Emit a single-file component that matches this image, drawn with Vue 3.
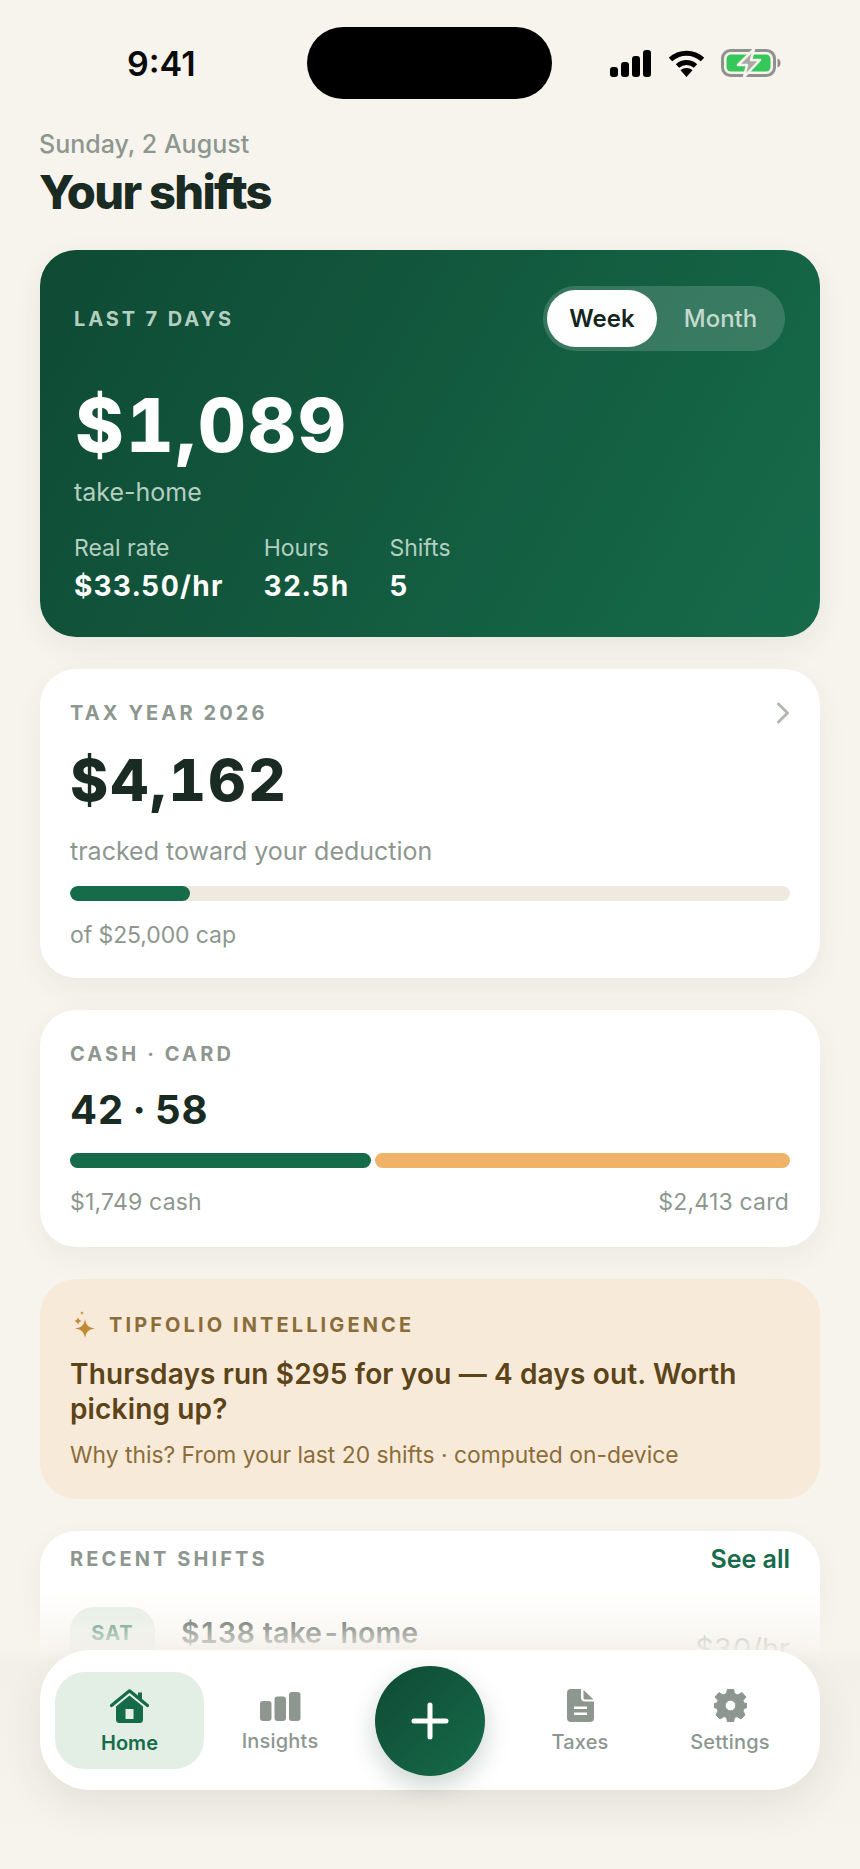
<template>
  <div class="screen">
    <div class="status">
      <span class="time">9:41</span>
      <div class="island"></div>
      <div class="status-icons">
        <svg width="42" height="27" viewBox="0 0 42 27">
          <rect x="0" y="17" width="8" height="10" rx="3" />
          <rect x="11" y="12" width="8" height="15" rx="3" />
          <rect x="22" y="6" width="8" height="21" rx="3" />
          <rect x="33" y="0" width="8" height="27" rx="3" />
        </svg>
        <svg width="37" height="27" viewBox="0 0 37 27">
          <path d="M2.5 9.5C11.5 1 25.5 1 34.5 9.5" fill="none" stroke="#000" stroke-width="5" />
          <path d="M9.5 16C14.8 11.3 22.2 11.3 27.5 16" fill="none" stroke="#000" stroke-width="5" />
          <path d="M12.5 20.2C16 17.2 21 17.2 24.5 20.2L18.5 27Z" />
        </svg>
        <svg width="60" height="28" viewBox="0 0 60 28">
          <rect x="1.5" y="1.5" width="52" height="25" rx="8" fill="none" stroke="#8f918d" stroke-width="3" />
          <rect x="5.5" y="5.5" width="44" height="17" rx="4.5" fill="#35c759" />
          <path d="M56.5 9.5C59 10.5 59.5 12 59.5 14C59.5 16 59 17.5 56.5 18.500Z" fill="#8f918d" />
          <path d="M33 0L17 16H26L23 28L39 11H30Z" fill="#a9aaa6" stroke="#f7f4ee" stroke-width="2.500" stroke-linejoin="round" />
        </svg>
      </div>
    </div>

    <header class="head">
      <div class="date">Sunday, 2 August</div>
      <h1>Your shifts</h1>
    </header>

    <main class="cards">
      <section class="hero">
        <div class="hero-top">
          <span class="eyebrow hero-eyebrow">LAST 7 DAYS</span>
          <div class="toggle">
            <span class="toggle-on">Week</span>
            <span class="toggle-off">Month</span>
          </div>
        </div>
        <div class="hero-amount">$1,089</div>
        <div class="hero-sub">take-home</div>
        <div class="stats">
          <div v-for="s in stats" :key="s.label" class="stat">
            <span class="stat-label">{{ s.label }}</span>
            <span class="stat-value">{{ s.value }}</span>
          </div>
        </div>
      </section>

      <section class="card tax">
        <div class="row">
          <span class="eyebrow">TAX YEAR 2026</span>
          <svg class="chev" width="14" height="22" viewBox="0 0 14 22">
            <path d="M2.500 2L11.500 11L2.500 20" fill="none" stroke="#b3b8b0" stroke-width="3" stroke-linecap="round" stroke-linejoin="round" />
          </svg>
        </div>
        <div class="tax-amount">$4,162</div>
        <div class="tax-sub">tracked toward your deduction</div>
        <div class="track"><div class="track-fill"></div></div>
        <div class="small">of $25,000 cap</div>
      </section>

      <section class="card cash">
        <span class="eyebrow">CASH · CARD</span>
        <div class="cash-split">42 · 58</div>
        <div class="split-bar">
          <div class="split-cash"></div>
          <div class="split-card"></div>
        </div>
        <div class="row small cash-labels">
          <span>$1,749 cash</span>
          <span>$2,413 card</span>
        </div>
      </section>

      <section class="tip">
        <div class="tip-top">
          <svg width="24" height="27" viewBox="0 0 24 27">
            <path d="M13 8C14 14 16.500 16.500 23 17.500C16.500 18.500 14 21 13 27C12 21 9.500 18.500 3 17.500C9.500 16.500 12 14 13 8Z" fill="#c18a35" />
            <path d="M6 6C6.400 8.500 7.500 9.600 10 10C7.500 10.400 6.400 11.500 6 14C5.600 11.500 4.500 10.400 2 10C4.500 9.600 5.600 8.500 6 6Z" fill="#c18a35" />
            <path d="M10 0C10.200 1.200 10.800 1.800 12 2C10.800 2.200 10.200 2.800 10 4C9.800 2.800 9.200 2.200 8 2C9.200 1.800 9.800 1.200 10 0Z" fill="#c18a35" />
          </svg>
          <span class="tip-label">TIPFOLIO INTELLIGENCE</span>
        </div>
        <p class="tip-head">Thursdays run $295 for you — 4 days out. Worth picking up?</p>
        <p class="tip-sub">Why this? From your last 20 shifts · computed on-device</p>
      </section>

      <section class="card recent">
        <div class="row recent-top">
          <span class="eyebrow">RECENT SHIFTS</span>
          <span class="see-all">See all</span>
        </div>
        <div class="shift">
          <div class="day">SAT</div>
          <div class="shift-title">$138 take-home</div>
          <div class="shift-rate">$30/hr</div>
        </div>
      </section>
    </main>

    <div class="fade"></div>

    <nav class="nav">
      <div class="nav-item active">
        <svg width="39" height="34" viewBox="0 0 39 34">
          <path d="M1.500 16.500L19.500 1.800L37.500 16.500" fill="none" stroke="#156a4a" stroke-width="3.200" stroke-linecap="round" stroke-linejoin="round" />
          <path d="M28 3.500H32V11L28 8Z" fill="#156a4a" />
          <path fill-rule="evenodd" d="M19.500 6.500L33 17.500V30.500A3.500 3.500 0 0 1 29.500 34H9.500A3.500 3.500 0 0 1 6 30.500V17.500ZM15.500 20V30H23.500V20Z" fill="#156a4a" />
        </svg>
        <span>Home</span>
      </div>
      <div class="nav-item insights">
        <svg width="41" height="29" viewBox="0 0 41 29">
          <rect x="0" y="9" width="11.500" height="20" rx="3" />
          <rect x="14.500" y="4.500" width="11.500" height="24.500" rx="3" />
          <rect x="29" y="0" width="11.500" height="29" rx="3" />
        </svg>
        <span>Insights</span>
      </div>
      <div class="nav-fab-wrap">
        <button class="fab" aria-label="Add">
          <svg width="38" height="38" viewBox="0 0 38 38">
            <path d="M19 3V35M3 19H35" stroke="#fff" stroke-width="5" stroke-linecap="round" />
          </svg>
        </button>
      </div>
      <div class="nav-item">
        <svg width="27" height="33" viewBox="0 0 27 33">
          <path fill-rule="evenodd" d="M4 0H14V8.500A4 4 0 0 0 18 12.500H27V29A4 4 0 0 1 23 33H4A4 4 0 0 1 0 29V4A4 4 0 0 1 4 0ZM7 17.500V20H20V17.500ZM7 23.500V26H20V23.500Z" />
          <path d="M16.500 1L26.500 10.500H18A1.500 1.500 0 0 1 16.500 9Z" />
        </svg>
        <span>Taxes</span>
      </div>
      <div class="nav-item">
        <svg width="33" height="33" viewBox="0 0 33 33">
          <path fill-rule="evenodd" d="M13.500 0H19.500L20.500 4.500L24 6L28 3.500L32 8L29 11.500L30 14L33 14.500V18.500L30 19.500L29 22L31 26L27 30L23 27.500L20.500 28.500L19.500 33H13.500L12.500 28.500L10 27.500L6 30L2 26L4 22L3 19.500L0 18.500V14.500L3 14L4 11.500L1 8L5 3.500L9 6L12.500 4.500ZM16.500 11.200A5.300 5.300 0 1 0 16.500 21.800A5.300 5.300 0 1 0 16.500 11.200Z" stroke="#8d978f" stroke-width="1" stroke-linejoin="round" />
        </svg>
        <span>Settings</span>
      </div>
    </nav>
  </div>
</template>

<script setup>
const stats = [
  { label: 'Real rate', value: '$33.50/hr' },
  { label: 'Hours', value: '32.5h' },
  { label: 'Shifts', value: '5' },
]
</script>

<style>
body {
  background: #f7f4ee;
}
</style>

<style scoped>
.screen {
  position: relative;
  width: 860px;
  height: 1869px;
  overflow: hidden;
  background: #f7f4ee;
  font-family: Inter, "Liberation Sans", sans-serif;
  color: #1a2b23;
}

.status {
  display: flex;
  align-items: center;
  height: 72px;
  padding-top: 27px;
}

.time {
  width: 307px;
  padding-left: 127px;
  box-sizing: border-box;
  font-size: 34px;
  font-weight: 600;
  color: #0b0b0b;
}

.island {
  width: 245px;
  height: 72px;
  border-radius: 36px;
  background: #000;
}

.status-icons {
  display: flex;
  align-items: center;
  gap: 16px;
  margin-left: 58px;
}

.head {
  padding: 29px 39px 0;
}

.date {
  font-size: 25px;
  line-height: 32px;
  font-weight: 500;
  color: #8d978f;
}

h1 {
  margin: 5px 0 0;
  font-size: 47px;
  line-height: 54px;
  font-weight: 800;
  letter-spacing: -1.7px;
  color: #1a2b23;
}

.cards {
  display: flex;
  flex-direction: column;
  gap: 32px;
  margin-top: 31px;
  padding: 0 40px;
}

.hero {
  height: 387px;
  box-sizing: border-box;
  padding: 36px 35px 0 34px;
  border-radius: 36px;
  background: linear-gradient(120deg, #0f4a34 0%, #166b4b 100%);
  box-shadow: 0 10px 30px rgba(60, 50, 30, 0.07);
  color: #fff;
}

.hero-top {
  display: flex;
  justify-content: space-between;
  align-items: center;
}

.eyebrow {
  font-size: 20px;
  line-height: 26px;
  font-weight: 700;
  letter-spacing: 3.1px;
  color: #8d978f;
}

.hero-eyebrow {
  letter-spacing: 2.9px;
  color: #b4cfc1;
}

.toggle {
  display: flex;
  align-items: center;
  width: 242px;
  height: 65px;
  box-sizing: border-box;
  padding: 4px;
  border-radius: 33px;
  background: rgba(255, 255, 255, 0.16);
  font-size: 24px;
}

.toggle-on {
  width: 110px;
  height: 57px;
  border-radius: 29px;
  background: #fff;
  color: #14251d;
  font-weight: 600;
  text-align: center;
  line-height: 57px;
}

.toggle-off {
  flex: 1;
  padding-left: 3px;
  text-align: center;
  color: #c4dacd;
  font-weight: 500;
}

.hero-amount {
  margin-top: 30px;
  padding-left: 1px;
  font-size: 74px;
  line-height: 88px;
  font-weight: 800;
  font-variant-numeric: tabular-nums;
  letter-spacing: 2.2px;
}

.hero-sub {
  margin-top: 7px;
  font-size: 25px;
  line-height: 32px;
  color: #b4cfc1;
}

.stats {
  display: flex;
  gap: 40px;
  margin-top: 26px;
}

.stat {
  display: flex;
  flex-direction: column;
  gap: 7px;
}

.stat-label {
  font-size: 23px;
  line-height: 28px;
  color: #b4cfc1;
}

.stat-value {
  font-size: 28px;
  line-height: 34px;
  font-weight: 700;
  font-variant-numeric: tabular-nums;
  letter-spacing: 1.3px;
}

.card {
  box-sizing: border-box;
  padding: 31px 30px 0;
  border-radius: 36px;
  background: #fff;
  box-shadow: 0 10px 30px rgba(60, 50, 30, 0.06);
}

.row {
  display: flex;
  justify-content: space-between;
  align-items: center;
}

.tax {
  height: 309px;
}

.tax-amount {
  margin-top: 18px;
  font-size: 58px;
  line-height: 72px;
  font-weight: 800;
  font-variant-numeric: tabular-nums;
  letter-spacing: 2.4px;
}

.tax-sub {
  margin-top: 19px;
  font-size: 25px;
  line-height: 32px;
  color: #8d978f;
}

.track {
  margin-top: 19px;
  height: 15px;
  border-radius: 8px;
  background: #eeeadf;
  overflow: hidden;
}

.track-fill {
  width: 120px;
  height: 100%;
  border-radius: 8px;
  background: #166b4b;
}

.small {
  font-size: 23px;
  line-height: 28px;
  color: #8d978f;
}

.tax .small {
  margin-top: 20px;
  font-size: 23px;
  letter-spacing: -0.1px;
}

.cash {
  height: 237px;
}

.cash .eyebrow {
  display: block;
}

.cash-split {
  margin-top: 18px;
  font-size: 40px;
  line-height: 50px;
  font-weight: 700;
  letter-spacing: 0.9px;
  word-spacing: -2px;
}

.split-bar {
  display: flex;
  gap: 4px;
  margin-top: 18px;
  height: 15px;
}

.split-cash {
  width: 301px;
  border-radius: 8px;
  background: #166b4b;
}

.split-card {
  flex: 1;
  border-radius: 8px;
  background: #f0b266;
}

.cash-labels {
  margin-top: 20px;
  padding-right: 1px;
  letter-spacing: 0.2px;
}

.tip {
  height: 220px;
  box-sizing: border-box;
  padding: 32px 30px 0;
  border-radius: 36px;
  background: #f7ead8;
}

.tip-top {
  display: flex;
  align-items: center;
  gap: 13px;
  padding-left: 2px;
}

.tip-label {
  font-size: 20px;
  line-height: 26px;
  font-weight: 700;
  letter-spacing: 3.1px;
  color: #8b6d3a;
}

.tip-head {
  margin: 19px 0 0;
  font-size: 28px;
  line-height: 35px;
  font-weight: 570;
  letter-spacing: 0.15px;
  color: #5c4318;
}

.tip-sub {
  margin: 13px 0 0;
  font-size: 22.85px;
  line-height: 30px;
  color: #8b6d3a;
}

.recent {
  height: 200px;
  padding-top: 13px;
}

.see-all {
  font-size: 25px;
  font-weight: 600;
  color: #166b4b;
}

.shift {
  position: relative;
  display: flex;
  align-items: flex-start;
  gap: 26px;
  margin-top: 33px;
}

.day {
  width: 85px;
  height: 76px;
  border-radius: 24px;
  background: #e3eee5;
  font-size: 20px;
  font-weight: 700;
  line-height: 52px;
  text-align: center;
  letter-spacing: 1px;
  color: #166b4b;
}

.shift-title {
  margin-top: 9px;
  font-size: 28.6px;
  line-height: 34px;
  font-weight: 600;
  font-variant-numeric: tabular-nums;
}

.shift-rate {
  position: absolute;
  right: 0;
  top: 25px;
  font-size: 29px;
  line-height: 34px;
  font-variant-numeric: tabular-nums;
  color: #8d978f;
}

.fade {
  position: absolute;
  left: 0;
  right: 0;
  top: 1590px;
  bottom: 0;
  background: linear-gradient(to bottom, rgba(247, 244, 238, 0) 0, rgba(247, 244, 238, 0.45) 30px, rgba(247, 244, 238, 0.88) 58px, #f3f0e9 75px, #f7f4ee 100%);
}

.nav {
  position: absolute;
  left: 40px;
  right: 40px;
  top: 1650px;
  height: 140px;
  box-sizing: border-box;
  padding: 22px 15px 21px;
  display: grid;
  grid-template-columns: repeat(5, 1fr);
  grid-template-rows: 97px;
  border-radius: 50px;
  background: #fff;
  box-shadow: 0 16px 40px rgba(60, 50, 30, 0.09);
}

.nav-item {
  display: flex;
  flex-direction: column;
  align-items: center;
  padding-top: 17px;
  color: #8d978f;
  font-size: 20px;
  font-weight: 500;
  letter-spacing: 0.2px;
  line-height: 26px;
  border-radius: 30px;
  fill: #8d978f;
}

.nav-item span {
  margin-top: 7px;
}

.nav-item.active {
  margin-right: 1px;
  background: #e3eee5;
  color: #166b4b;
  font-weight: 600;
  letter-spacing: 0;
}

.nav-item.insights {
  padding-top: 20px;
}

.nav-item.insights span {
  margin-top: 7px;
}

.nav-fab-wrap {
  display: flex;
  justify-content: center;
  align-items: center;
  height: 97px;
}

.fab {
  display: flex;
  flex-shrink: 0;
  align-items: center;
  justify-content: center;
  width: 110px;
  height: 110px;
  padding: 0;
  border: none;
  border-radius: 50%;
  background: linear-gradient(135deg, #0f4a34, #166b4b);
  box-shadow: 0 10px 26px rgba(20, 60, 40, 0.22);
}
</style>
